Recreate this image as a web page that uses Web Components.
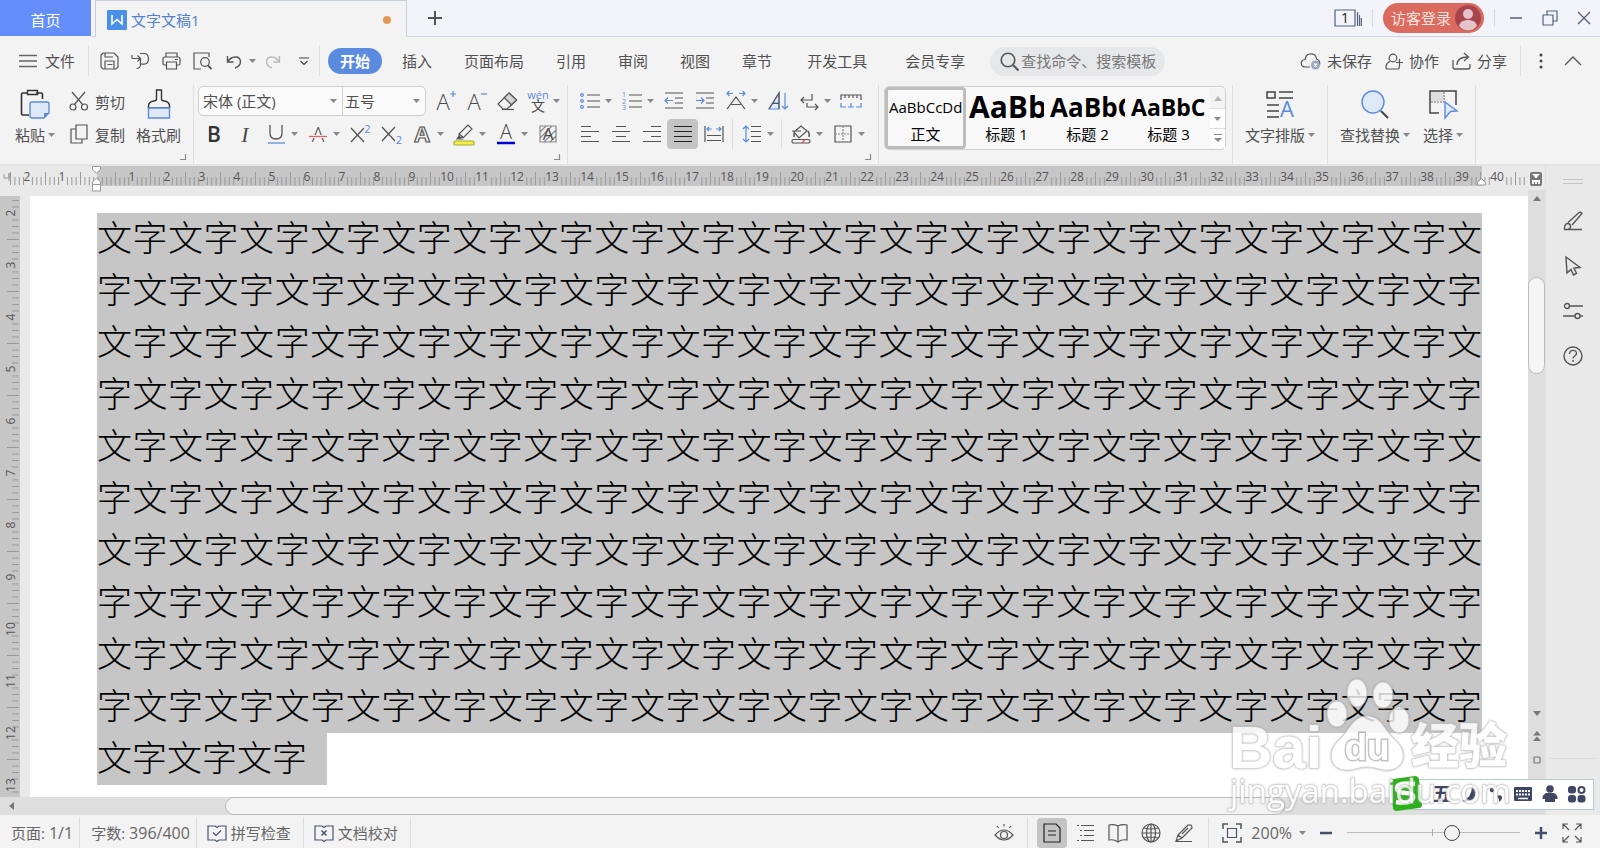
<!DOCTYPE html>
<html lang="zh-CN">
<head>
<meta charset="utf-8">
<title>文字文稿1</title>
<style>
  html, body { height: 100%; }
  body {
    margin: 0;
    font-family: "Open Sans", "Noto Sans CJK SC", sans-serif;
    font-size: 15px;
    color: #505050;
    background: #f3f3f3;
    overflow: hidden;
    --blue: #5b8bdf;
    --line: #dedede;
    --track: #dedede;
  }
</style>
</head>
<body>
<writer-app></writer-app>

<script>
// 图标表：[宽, 高, 内容]
const ICONS = {
  wlogo: [20, 20, '<rect width="20" height="20" rx="1" fill="#4a90e8" stroke="none"/><path d="M5 5v9l5-4.500 5 4.500V5" stroke="#fff" stroke-width="1.600"/>'],
  plus: [14, 14, '<path d="M7 0v14M0 7h14" stroke="#555" stroke-width="2"/>'],
  pages: [28, 18, '<path d="M1 1h20v16H1zM23.500 3v14M25.500 6v11M27.300 9v8" stroke="#55617d"/><text x="11" y="14" text-anchor="middle" font-size="14" style="fill:#222">1</text>'],
  avatar: [26, 26, '<circle cx="13" cy="13" r="13" fill="#a8444c" stroke="none"/><circle cx="13" cy="9" r="5" fill="#e3c3c7" stroke="none"/><path d="M4 21c1-8 17-8 18 0-5 6-13 6-18 0z" fill="#e3c3c7" stroke="none"/>'],
  min: [14, 14, '<path d="M1 7h12" stroke="#55617d" stroke-width="1.500"/>'],
  restore: [16, 16, '<path d="M1 5h10v10H1zM5 5V1h10v10h-4" stroke="#55617d"/>'],
  close: [14, 14, '<path d="M1 1l12 12M13 1L1 13" stroke="#55617d" stroke-width="1.400"/>'],
  menu: [18, 14, '<path d="M0 1.500h18M0 7h18M0 12.500h18" stroke="#666" stroke-width="1.300"/>'],
  save: [19, 18, '<path d="M3 1h11l4 4v10l-2 2H3l-2-2V3z"/><path d="M5 1v4h8M5 17V9h9v8M7.500 12.500h5"/>'],
  exportpdf: [19, 18, '<path d="M9 1.500h4q4.500 0 4.500 5.300t-4.500 5.300H9M9.500 7v6q-.5 3.500-4 3.500M1 6.500h8M6.500 3.500l3 3-3 3M1 3v3.500"/>'],
  print: [19, 18, '<path d="M4 5V1h11v4M4 13H2q-1 0-1-2V7q0-2 2-2h13q2 0 2 2v4q0 2-1 2h-2M4.500 10h10v7h-10zM13 7.500h3"/>'],
  preview: [19, 18, '<path d="M8 17H1V1h15v4"/><circle cx="12" cy="10" r="4.300"/><path d="M15 13.500l3.500 3.500" stroke-width="1.800"/>'],
  undo: [16, 15, '<path d="M1.500 2v6h6M2 7.500C5 2 14 1 14.500 7.500c0 3-2.500 5.500-5.500 6.500" stroke-width="1.400"/>'],
  redo: [16, 15, '<path stroke="#bbb" d="M14.500 2v6h-6M14 7.500C11 2 2 1 1.500 7.500c0 3 2.500 5.500 5.500 6.500" stroke-width="1.400"/>'],
  more: [10, 9, '<path d="M0 1h10M1.500 4L5 7.500 8.500 4" stroke="#444"/>'],
  search: [19, 19, '<circle cx="8" cy="8" r="6.800" stroke-width="1.600"/><path d="M13 13l5.500 5.500" stroke-width="2"/>'],
  cloud: [21, 18, '<path d="M10 15H5c-5-.5-5-7 0-7.500C6 0 16 0 16.500 7c3 1 3.500 4 3 6"/><circle cx="15.500" cy="13" r="4.500" fill="#9ba6bf" stroke="none"/><path d="M14 11.500l3 3m0-3l-3 3" stroke="#fff"/>'],
  team: [18, 17, '<circle cx="8" cy="5" r="3.800"/><path d="M5 8.500c-5 2-4.500 7-3 7.500h11c1.500 0 1.500-2 1-3M11 9.500h7M14.500 6v7"/>'],
  share: [19, 18, '<path d="M1 8v7q0 2 2 2h13q2 0 2-2v-3M5 13c0-6 4-8 11-8M12 1l4.500 4L12 9" stroke-width="1.300"/>'],
  dots: [4, 18, '<g fill="#444" stroke="none"><circle cx="2" cy="3" r="1.500"/><circle cx="2" cy="9" r="1.500"/><circle cx="2" cy="15" r="1.500"/></g>'],
  up: [18, 10, '<path d="M1 9l8-8 8 8" stroke-width="1.300"/>'],
  caret: [7, 4, '<path d="M0 0h7L3.500 4z" fill="#888" stroke="none"/>'],

  paste: [30, 30, '<path d="M8 4H2.500q-1 0-1 1v20q0 1 1 1H9M16 4h5.500q1 0 1 1v5" stroke="#333" stroke-width="1.600"/><path d="M7.500 1.500h10v4h-10z" stroke="#333" stroke-width="1.400"/><path d="M12 13h15q2 0 2 2v9l-5 5H12q-2 0-2-2V15q0-2 2-2z" fill="#dfe8f7" stroke="#5b8bdf" stroke-width="1.400"/><path d="M24 29v-5h5z" fill="#5b8bdf" stroke="none"/>'],
  cut: [20, 20, '<path d="M3 1l11 13M16 1L5 14"/><circle cx="4" cy="16" r="3"/><circle cx="15.500" cy="16" r="3"/>'],
  copy: [20, 20, '<path d="M7 1h11v14H7zM7 5H2v14h11v-4"/>'],
  brush: [26, 30, '<path d="M10.500 1h5v9q0 2 3 2 5 1 5 5v2h-21v-2q0-4 5-5 3 0 3-2z" stroke="#333" stroke-width="1.400"/><path d="M2.500 19h21v10h-21z" fill="#dfe8f7" stroke="#5b8bdf" stroke-width="1.400"/>'],
  bigger: [22, 22, '<text x="9" y="20" text-anchor="middle" font-size="22" font-weight="300">A</text><path d="M16 4h6M19 1v6" stroke="#5b8bdf"/>'],
  smaller: [22, 22, '<text x="9" y="20" text-anchor="middle" font-size="22" font-weight="300">A</text><path d="M16 4h6" stroke="#5b8bdf"/>'],
  eraser: [22, 20, '<path d="M13 2l7.500 7L11 18H7l-5-5z"/><path d="M13 2l7.500 7-5 4.800-7.300-7z" fill="#d5d5d5"/><path d="M6 18.500h12"/>'],
  pinyin: [22, 22, '<text x="11" y="9" text-anchor="middle" font-size="11" style="fill:#5b8bdf">wén</text><text x="11" y="21" text-anchor="middle" font-size="14">文</text>'],
  bold: [20, 22, '<text x="10" y="19" text-anchor="middle" font-size="21" font-weight="600" style="fill:#333">B</text>'],
  italic: [20, 22, '<text x="10" y="19" text-anchor="middle" font-size="22" font-style="italic" style="font-family:Liberation Serif">I</text>'],
  underline: [20, 22, '<path d="M4 2v8q0 6 6 6t6-6V2" stroke-width="1.300"/><path d="M2 20h17" stroke="#5b8bdf" stroke-width="1.300"/>'],
  strike: [20, 22, '<text x="10" y="19" text-anchor="middle" font-size="21" font-weight="300">A</text><path d="M1 13.500h18" stroke="#f3f3f3" stroke-width="3"/><path d="M1 13.500h18" stroke="#e0666e" stroke-width="1.300"/>'],
  sup: [22, 22, '<path d="M2 5l13 14M15 5L2 19" stroke-width="1.300"/><text x="18.500" y="10" text-anchor="middle" font-size="11" style="fill:#5b8bdf">2</text>'],
  sub: [22, 22, '<path d="M2 4l13 14M15 4L2 18" stroke-width="1.300"/><text x="19" y="21" text-anchor="middle" font-size="11" style="fill:#5b8bdf">2</text>'],
  outlineA: [20, 22, '<text x="10" y="19" text-anchor="middle" font-size="22" font-weight="700" style="fill:#f3f3f3;stroke:#555;stroke-width:1.200">A</text>'],
  marker: [22, 22, '<path d="M6 11l9-9 4 4-8 8-5 1zM6 11l5 4M4 16l2-3 3 3z"/><rect x="1" y="18" width="20" height="4" rx="1" fill="#f5f03a" stroke="#a8a850"/>'],
  fontcolor: [20, 22, '<text x="10" y="16" text-anchor="middle" font-size="20" font-weight="300">A</text><path d="M1 20h18" stroke="#0000d0" stroke-width="2.500"/>'],
  shadeA: [20, 20, '<path d="M2 2h16v16H2zM2 8l6-6M2 14L14 2M6 18L18 6M12 18l6-6" stroke="#888"/><text x="10" y="16" text-anchor="middle" font-size="17">A</text>'],

  bullets: [22, 20, '<path d="M8 4h13M8 10h13M8 16h13"/><g stroke="#5b8bdf"><circle cx="3" cy="4" r="1.300"/><circle cx="3" cy="10" r="1.300"/><circle cx="3" cy="16" r="1.300"/></g>'],
  numbers: [22, 20, '<path d="M8 4h13M8 10h13M8 16h13"/><g font-size="7" style="--t:#5b8bdf"><text x="1" y="6">1</text><text x="1" y="12.500">2</text><text x="1" y="19">3</text></g>'],
  outdent: [20, 20, '<path d="M1 2h18M11 7h8M11 12h8M1 17h18"/><path d="M9 9.500H1M4 6.500l-3 3 3 3" stroke="#5b8bdf"/>'],
  indent: [20, 20, '<path d="M1 2h18M11 7h8M11 12h8M1 17h18"/><path d="M1 9.500h8M6 6.500l3 3-3 3" stroke="#5b8bdf"/>'],
  scale: [22, 22, '<path d="M2 19l9-12 9 12M6 14.500h10"/><path d="M8 3.500H2M4.500 1L2 3.500 4.500 6M14 3.500h6M17.500 1L20 3.500 17.500 6" stroke="#5b8bdf"/>'],
  sort: [20, 20, '<path d="M1 18L11 2v16zM5 12h6" stroke="#5b8bdf" fill="#dfe8f7"/><path d="M1 18L11 2v16M4.500 12.500H11"/><path d="M17 2v16M14 15l3 3 3-3" stroke="#5b8bdf"/>'],
  wrap: [20, 20, '<path d="M13 3v6H2M5 6L2 9l3 3M8 12v4h11M16 13l3 3-3 3"/>'],
  tabs: [22, 16, '<path d="M1 7V2h20v5M5 2v3M9 2v3M13 2v3M17 2v3"/><path d="M1 10v4h5M16 14h5v-4M8 14h6M11 10v4" stroke="#5b8bdf"/>'],
  left: [20, 18, '<path d="M1 1.500h10M1 6.500h18M1 11.500h10M1 16.500h18"/>'],
  center: [20, 18, '<path d="M5 1.500h10M1 6.500h18M5 11.500h10M1 16.500h18"/>'],
  right: [20, 18, '<path d="M9 1.500h10M1 6.500h18M9 11.500h10M1 16.500h18"/>'],
  justify: [20, 18, '<path d="M1 1.500h18M1 6.500h18M1 11.500h18M1 16.500h18" stroke="#222"/>'],
  spread: [20, 18, '<path d="M1 1v16M19 1v16M3 10.500h14M3 15.500h14"/><path d="M8 4H3M5 2L3 4l2 2M12 4h5M15 2l2 2-2 2" stroke="#5b8bdf"/>'],
  spacing: [20, 20, '<path d="M9 2.500h10M9 7.500h10M9 12.500h10M9 17.500h10"/><path d="M4 2v16M1 5l3-3 3 3M1 15l3 3 3-3" stroke="#5b8bdf"/>'],
  fill: [22, 20, '<path d="M4 8l7-6 6 5-8 7zM2 7h9"/><path d="M4 9v4M18 7q2 3 1 6" stroke-width="1.500"/><rect x="2" y="15.500" width="18" height="3.500" rx="1.500"/><path d="M12 19l3-3.500" stroke="#e05050"/>'],
  borders: [18, 18, '<path d="M1 1h16v16H1z"/><path d="M9 1v16M1 9h16" stroke-dasharray="2 1" stroke="#888"/>'],
  layout: [30, 30, '<path d="M2 3h8v6H2zM14 3h14M14 9h14M2 16h12M2 22h12M2 28h12" stroke="#444" stroke-width="1.500"/><text x="22" y="28" text-anchor="middle" font-size="22" style="fill:#5b8bdf">A</text>'],
  find: [30, 30, '<path d="M21 22l7 7" stroke="#444" stroke-width="2"/><circle cx="13" cy="13" r="11" fill="#dfe8f7" stroke="#5b8bdf" stroke-width="1.400"/>'],
  select: [32, 30, '<path d="M3 2h13v10H3z" fill="#ddd" stroke="none"/><path d="M12 24H3V2h26v14" stroke="#444" stroke-width="1.500"/><path d="M17 3v10H4" stroke="#777" stroke-dasharray="2 1"/><path d="M18 13l12 9-6.500.500L18 29z" fill="#dfe8f7" stroke="#5b8bdf" stroke-width="1.400"/>'],
  corner: [6, 6, '<path d="M5.500 0v5.500H0" stroke="#888"/>'],

  pencil: [20, 20, '<path d="M1 18.500h18M1 18.500c1-1 0-6 3.500-6 4 0 4 6 0 6M5 11.500L15.500 2q2-1.500 3.500.5L9 14" stroke-width="1.400"/>'],
  cursor: [16, 20, '<path d="M1 1l14 10.500-6 .5 2.500 5.500-3 1.500L6 13.500 2 17z" stroke-width="1.400"/>'],
  sliders: [20, 18, '<g stroke-width="1.400"><circle cx="4" cy="4" r="2.500"/><path d="M6.500 4H20M0 14h12"/><circle cx="14.500" cy="14" r="2.500"/><path d="M17 14h3"/></g>'],
  help: [20, 20, '<circle cx="10" cy="10" r="9" stroke-width="1.400"/><path d="M6.500 8c0-5 7-4.500 7-.5 0 2.500-3.500 2.500-3.500 5M10 14v2" stroke-width="1.400"/>'],
  rulertoggle: [14, 16, '<rect x="1" y="1" width="12" height="14" rx="2" fill="#777" stroke="none"/><path d="M3 3h8L8 6v1H6V6zM3 9h8v4H3z" fill="#fff" stroke="none"/><path d="M5.500 11v2M8.500 11v2" stroke="#777"/>'],
  arrup: [8, 5, '<path d="M0 5h8L4 0z" fill="#777" stroke="none"/>'],
  arrdown: [8, 5, '<path d="M0 0h8L4 5z" fill="#777" stroke="none"/>'],
  arrleft: [5, 8, '<path d="M5 0v8L0 4z" fill="#777" stroke="none"/>'],
  dblup: [8, 10, '<path d="M0 4.500h8L4 0zM0 10h8L4 5.500z" fill="#777" stroke="none"/>'],
  dbldown: [8, 10, '<path d="M0 0h8L4 4.500zM0 5.500h8L4 10z" fill="#777" stroke="none"/>'],
  square: [8, 8, '<rect x="1" y="1" width="6" height="6" rx="1" stroke="#777"/>'],

  spell: [20, 18, '<path d="M8 2H1v14h7l2 1.500 2-1.500h7V2h-7l-2 1.500z" stroke="#4a5470"/><path d="M6 8.500l3 3 5-5" stroke="#4a5470"/>'],
  proof: [20, 18, '<path d="M8 2H1v14h7l2 1.500 2-1.500h7V2h-7l-2 1.500z" stroke="#4a5470"/><path d="M7.500 6.500l5 5m0-5l-5 5" stroke="#4a5470" stroke-width="1.500"/>'],
  eye: [20, 20, '<path d="M1 12q9-10 18 0-9 10-18 0zM10 1v2.500M3 3l1.500 2M17 3l-1.500 2"/><circle cx="10" cy="12" r="3.500"/>'],
  pageview: [18, 20, '<path d="M1 1h12l4 4v14H1zM5 8h8M5 12h8" stroke="#222"/>'],
  outline: [18, 18, '<path d="M1 1.500h2M5 1.500h13M4 6.500h2M8 6.500h10M4 11.500h2M8 11.500h10M1 16.500h2M5 16.500h13"/>'],
  book: [20, 20, '<path d="M10 3q-4-2-9-1v15q5-1 9 2 4-3 9-2V2q-5-1-9 1zM10 3v15"/>'],
  globe: [20, 20, '<circle cx="10" cy="10" r="9"/><ellipse cx="10" cy="10" rx="4.500" ry="9"/><path d="M1 10h18M10 1v18M3 5q7 2 14 0M3 15q7-2 14 0"/>'],
  pen: [20, 20, '<path d="M4 12L14 2q4-1 4 3L8 15l-6 3zM4 12l4 3M2 18.500h16M8 11l6-6"/>'],
  fit: [20, 20, '<path d="M1 6V1h5M14 1h5v5M19 14v5h-5M6 19H1v-5" stroke-width="1.500"/><path d="M5.500 5.500h9v9h-9z" stroke="#4a5470"/>'],
  minus: [14, 14, '<path d="M1 7h12" stroke="#434e68" stroke-width="2.500"/>'],
  add: [14, 14, '<path d="M1 7h12M7 1v12" stroke="#434e68" stroke-width="2.500"/>'],
  full: [20, 20, '<path d="M1 6V1h5M1 1l6 6M14 1h5v5M19 1l-6 6M19 14v5h-5M19 19l-6-6M6 19H1v-5M1 19l6-6"/>'],

  sogou: [36, 36, '<path d="M3 6q0-3 3-3L28 0q3 0 4 3l3 26q0 3-3 3L10 35q-4 0-4-3z" fill="#2eb01c" stroke="none"/><path d="M28 8q-18-2-18 4 0 5 9 5 8 0 7 5-2 6-17 4" stroke="#fff" stroke-width="4.500"/>'],
  wubi: [18, 20, '<text x="9" y="17" text-anchor="middle" font-size="19" font-weight="700" style="fill:#3e4664">五</text>'],
  moon: [18, 18, '<path d="M12 1q7 5 2 12-5 5-12 3Q12 13 12 1z" fill="#3e4664" stroke="none"/>'],
  punct: [18, 18, '<g fill="#3e4664" stroke="none"><circle cx="5" cy="5" r="2.200"/><path d="M10 11q5-2 5 2 0 2-3 4 1-2-2-6z"/></g>'],
  keyboard: [20, 16, '<rect x="1" y="1" width="18" height="14" rx="1" fill="#3e4664" stroke="none"/><path d="M3 5h14M3 8.500h14" stroke="#fff" stroke-width="2" stroke-dasharray="2 1"/><path d="M5 12.500h10" stroke="#fff" stroke-width="1.500"/>'],
  person: [16, 18, '<g fill="#3e4664" stroke="none"><circle cx="8" cy="4" r="3.800"/><path d="M4 8h8q4 2 3.500 6H13v3H3v-3H.500Q0 10 4 8z"/></g>'],
  petals: [18, 18, '<g fill="#3e4664" stroke="none"><rect x="0" y="1" width="8" height="7.500" rx="3"/><rect x="0" y="10" width="8" height="7.500" rx="3"/><rect x="9.500" y="10" width="8" height="7.500" rx="3"/></g><circle cx="13.500" cy="5" r="3" stroke="#3e4664" stroke-width="2"/>'],
};

function icon(name) {
  const [w, h, body] = ICONS[name];
  return `<svg class="i-${name}" width="${w}" height="${h}" viewBox="0 0 ${w} ${h}" fill="none" stroke="#555" stroke-width="1.200" aria-hidden="true">${body}</svg>`;
}

const BASE = `
  :host { display: block; box-sizing: border-box; }
  * { box-sizing: border-box; }
  svg { display: block; flex: none; overflow: visible; }
  svg text { fill: var(--t, #4a4a4a); stroke: none; font-family: "Open Sans", "Noto Sans CJK SC", sans-serif; }
  button, input, select {
    font: inherit; color: inherit; background: none;
    border: 0; margin: 0; padding: 0; outline: 0;
  }
  button { display: flex; align-items: center; justify-content: center; white-space: nowrap; }
  .sep { width: 1px; background: var(--line); flex: none; }
  .grow { flex: 1; }
`;

class BaseElement extends HTMLElement {
  constructor() {
    super();
    this.attachShadow({ mode: 'open' });
  }

  connectedCallback() {
    this.shadowRoot.innerHTML = `<style>${BASE}${this.styles()}</style>${this.render()}`;
  }

  styles() { return ''; }
  render() { return '<slot></slot>'; }
}

// 标题栏
class TitleBar extends BaseElement {
  styles() {
    return `
      :host { display: flex; height: 37px; background: #f2f4f9; line-height: 20px; }
      .home { width: 91px; height: 36px; background: #648ffb; color: #fff; padding-top: 4px; }
      .lead { width: 4px; border-bottom: 1px solid #ccd3e0; }
      .doc { width: 312px; padding: 2px 15px 0 11px; gap: 4px; background: #f3f3f3; color: #5481cf;
        border: 1px solid #c9cfda; border-bottom: 0; justify-content: flex-start; }
      .dot { width: 8px; height: 8px; border-radius: 50%; background: #e29a58; margin-left: auto; }
      .rest { flex: 1; display: flex; align-items: center; border-bottom: 1px solid #ccd3e0; padding: 0 9px 0 21px; }
      .sep { height: 18px; margin: 0 10px; background: #d5d8de; }
      .login { height: 30px; border-radius: 15px; background: #db6b5f; color: #fbe3df; padding: 0 3px 0 8px; gap: 4px; }
      .wins { display: flex; gap: 20px; margin-left: 4px; }
      .wins button { width: 14px; height: 30px; }
    `;
  }

  render() {
    return `
      <button class="home">首页</button>
      <div class="lead"></div>
      <button class="doc">${icon('wlogo')}<span>文字文稿1</span><i class="dot"></i></button>
      <div class="rest">
        <button aria-label="新建">${icon('plus')}</button>
        <div class="grow"></div>
        <button aria-label="窗口">${icon('pages')}</button>
        <div class="sep"></div>
        <button class="login">访客登录${icon('avatar')}</button>
        <div class="sep"></div>
        <div class="wins">
          <button aria-label="最小化">${icon('min')}</button>
          <button aria-label="还原">${icon('restore')}</button>
          <button aria-label="关闭">${icon('close')}</button>
        </div>
      </div>
    `;
  }
}

// 菜单栏
class MenuBar extends BaseElement {
  styles() {
    return `
      :host { display: flex; align-items: center; height: 48px; padding: 0 18px 0 19px; line-height: 20px; }
      .file { gap: 8px; }
      .sep { height: 30px; }
      .file + .sep { margin: 0 5px 0 13px; }
      .quick { width: 31px; height: 30px; }
      .quick.drop { width: 39px; gap: 7px; padding-left: 6px; }
      nav { display: flex; align-items: center; gap: 4px; margin-left: 8px; }
      nav button { padding: 0 14px; height: 26px; }
      nav button.wide { padding: 0 17px; }
      nav .on { background: #5b8bdf; color: #fff; font-weight: 700; border-radius: 13px; padding: 0 12px; margin-right: 2px; }
      .search { display: flex; align-items: center; gap: 2px; height: 29px; width: 175px; border-radius: 15px;
        background: #e6e7e8; padding: 0 10px; margin-left: 8px; }
      input { width: 136px; }
      input::placeholder { color: #777; opacity: 1; }
      .act { gap: 6px; margin-right: 13px; }
    `;
  }

  render() {
    return `
      <button class="file">${icon('menu')}文件</button>
      <div class="sep"></div>
      <button class="quick" aria-label="保存">${icon('save')}</button>
      <button class="quick" aria-label="输出为PDF">${icon('exportpdf')}</button>
      <button class="quick" aria-label="打印">${icon('print')}</button>
      <button class="quick" aria-label="打印预览">${icon('preview')}</button>
      <button class="quick drop" aria-label="撤销">${icon('undo')}${icon('caret')}</button>
      <button class="quick" aria-label="恢复">${icon('redo')}</button>
      <button class="quick" aria-label="更多">${icon('more')}</button>
      <div class="sep"></div>
      <nav>
        <button class="on">开始</button>
        <button>插入</button>
        <button>页面布局</button>
        <button>引用</button>
        <button>审阅</button>
        <button>视图</button>
        <button>章节</button>
        <button class="wide">开发工具</button>
        <button class="wide">会员专享</button>
      </nav>
      <label class="search">${icon('search')}<input type="text" placeholder="查找命令、搜索模板" aria-label="查找命令、搜索模板"></label>
      <div class="grow"></div>
      <button class="act">${icon('cloud')}未保存</button>
      <button class="act">${icon('team')}协作</button>
      <button class="act">${icon('share')}分享</button>
      <div class="sep" style="margin-right:18px"></div>
      <button aria-label="更多选项" style="margin-right:21px">${icon('dots')}</button>
      <button aria-label="折叠功能区">${icon('up')}</button>
    `;
  }
}

// 小工具按钮
class ToolButton extends BaseElement {
  styles() {
    return `
      :host { flex: none; width: 31px; height: 30px; }
      :host([caret]) { width: 42px; }
      button { width: 100%; height: 100%; justify-content: flex-start; }
      .box { width: 31px; height: 30px; display: flex; align-items: center; justify-content: center; border-radius: 4px; }
      :host([active]) .box { background: #c4c4c4; }
    `;
  }

  render() {
    return `<button aria-label="${this.getAttribute('label')}">
      <span class="box">${icon(this.getAttribute('icon'))}</span>${this.hasAttribute('caret') ? icon('caret') : ''}
    </button>`;
  }
}

// 大按钮：上图标下文字
class BigButton extends BaseElement {
  styles() {
    return `
      button { flex-direction: column; line-height: 20px; }
      .pic { height: 36px; display: flex; align-items: center; }
      .text { height: 26px; display: flex; align-items: center; gap: 3px; }
    `;
  }

  render() {
    return `<button>
      <span class="pic">${icon(this.getAttribute('icon'))}</span>
      <span class="text"><slot></slot>${this.hasAttribute('caret') ? icon('caret') : ''}</span>
    </button>`;
  }
}

class RibbonGroup extends BaseElement {
  styles() {
    return `
      :host { display: grid; grid-template-rows: 64px 1fr; border-right: 1px solid var(--line); padding-top: 1px; flex: none; }
      .body { display: flex; }
      .foot { justify-self: end; padding: 4px 7px 0 0; }
    `;
  }

  render() {
    return `<div class="body"><slot></slot></div>${this.hasAttribute('more') ? `<div class="foot">${icon('corner')}</div>` : ''}`;
  }
}

// 字体与字号
class FontPicker extends BaseElement {
  styles() {
    return `
      :host { display: flex; width: 228px; height: 30px; margin-right: 3px; border: 1px solid #cfcfcf; border-radius: 5px; background: #fafafa; }
      .cell { display: grid; grid-template-columns: 1fr 12px; align-items: center; width: 82px; }
      .name { width: 144px; border-right: 1px solid #cfcfcf; }
      select { appearance: none; grid-area: 1 / 1 / 2 / 3; width: 100%; height: 28px; padding-left: 4px; }
      .cell:not(.name) select { padding-left: 2px; }
      svg { grid-area: 1 / 2; pointer-events: none; }
    `;
  }

  render() {
    return `
      <div class="cell name"><select aria-label="字体"><option>宋体 (正文)</option></select>${icon('caret')}</div>
      <div class="cell"><select aria-label="字号"><option>五号</option></select>${icon('caret')}</div>
    `;
  }
}

class StyleCard extends BaseElement {
  styles() {
    return `
      :host { width: 79px; height: 60px; overflow: hidden; margin: 0 1px; padding: 2px; color: #000; }
      :host([active]) { outline: 3px solid #bdbdbd; outline-offset: -2px; border-radius: 3px; }
      button { display: block; width: 100%; text-align: left; }
      .sample { display: block; height: 34px; line-height: 34px; overflow: hidden; font-weight: 700; font-size: var(--s, 15px); }
      :host([active]) .sample { font-weight: 400; padding-left: 1px; }
      .name { display: block; text-align: center; line-height: 20px; }
    `;
  }

  render() {
    return `<button style="--s:${this.getAttribute('size')}px"><span class="sample">AaBbCcDd</span><span class="name"><slot></slot></span></button>`;
  }
}

class StyleGallery extends BaseElement {
  styles() {
    return `
      :host { display: flex; width: 342px; height: 64px; border: 1px solid #d0d0d0; border-radius: 5px; background: #f8f8f8; padding: 1px 0; }
      .arrows { margin-left: auto; width: 15px; display: grid; grid-template-rows: repeat(3, 1fr); }
      .arrows button { border-top: 1px solid #ddd; background: #fff; }
      .arrows button:first-child { background: #f0f0f0; border: 0; opacity: 0.500; }
    `;
  }

  render() {
    return `
      <slot></slot>
      <div class="arrows">
        <button aria-label="上一行">${icon('arrup')}</button>
        <button aria-label="下一行">${icon('caret')}</button>
        <button aria-label="更多样式"><svg width="8" height="9" viewBox="0 0 8 9"><path d="M0 .5h8" stroke="#888"/><path d="M0 4h8L4 8z" fill="#888"/></svg></button>
      </div>
    `;
  }
}

// 功能区
class RibbonBar extends BaseElement {
  styles() {
    return `
      :host { display: flex; height: 81px; border-bottom: 2px solid #e3e3e3; }
      .rows { display: grid; grid-template-rows: 30px 30px; row-gap: 3px; }
      .rows > div { display: flex; }
      .clip button { gap: 6px; height: 30px; }
      .inner { width: 1px; background: var(--line); margin: 0 3px; }
    `;
  }

  tools(list) {
    return list.map(([name, label, flag = '']) =>
      name === '|' ? '<div class="inner"></div>' : `<tool-button icon="${name}" label="${label}" ${flag}></tool-button>`).join('');
  }

  render() {
    return `
      <ribbon-group more style="padding-left:15px">
        <big-button icon="paste" caret>粘贴</big-button>
        <div class="rows clip" style="margin:0 11px 0 14px">
          <button>${icon('cut')}剪切</button>
          <button>${icon('copy')}复制</button>
        </div>
        <big-button icon="brush" style="margin-right:12px">格式刷</big-button>
      </ribbon-group>
      <ribbon-group more style="padding-left:4px">
        <div class="rows" style="margin-right:3px">
          <div>
            <font-picker></font-picker>
            ${this.tools([['bigger', '增大字号'], ['smaller', '减小字号'], ['eraser', '清除格式'], ['pinyin', '拼音指南', 'caret']])}
          </div>
          <div>
            ${this.tools([['bold', '加粗'], ['italic', '倾斜'], ['underline', '下划线', 'caret'], ['strike', '删除线', 'caret'],
              ['sup', '上标'], ['sub', '下标'], ['outlineA', '文字效果', 'caret'], ['marker', '突出显示', 'caret'],
              ['fontcolor', '字体颜色', 'caret'], ['shadeA', '字符底纹']])}
          </div>
        </div>
      </ribbon-group>
      <ribbon-group more style="padding-left:6px">
        <div class="rows" style="margin-right:9px">
          <div>
            ${this.tools([['bullets', '项目符号', 'caret'], ['numbers', '编号', 'caret'], ['outdent', '减少缩进'], ['indent', '增加缩进'],
              ['scale', '中文版式', 'caret'], ['sort', '排序'], ['wrap', '换行', 'caret'], ['tabs', '制表位']])}
          </div>
          <div>
            ${this.tools([['left', '左对齐'], ['center', '居中'], ['right', '右对齐'], ['justify', '两端对齐', 'active'], ['spread', '分散对齐'],
              ['|'], ['spacing', '行距', 'caret'], ['|'], ['fill', '底纹', 'caret'], ['borders', '边框', 'caret']])}
          </div>
        </div>
      </ribbon-group>
      <ribbon-group style="padding-left:5px">
        <style-gallery style="margin-right:6px">
          <style-card active size="15">正文</style-card>
          <style-card size="30">标题 1</style-card>
          <style-card size="26">标题 2</style-card>
          <style-card size="23">标题 3</style-card>
        </style-gallery>
      </ribbon-group>
      <ribbon-group style="padding-left:12px">
        <big-button icon="layout" caret style="margin-right:12px">文字排版</big-button>
      </ribbon-group>
      <ribbon-group style="padding-left:12px">
        <big-button icon="find" caret style="margin-right:13px">查找替换</big-button>
        <big-button icon="select" caret style="margin-right:12px">选择</big-button>
      </ribbon-group>
    `;
  }
}

// 水平标尺，一格 35px
class HRuler extends BaseElement {
  styles() {
    return `
      :host { display: grid; grid-template-columns: 97px 1fr 46px; height: 30px; background: #e9e9e9; overflow: hidden; min-width: 0; }
      .band { grid-area: 1 / 2; height: 20px; background: #c6c6c6; }
      .ticks { grid-area: 1 / 1 / 2 / 4; display: flex; padding-left: 10px; overflow: hidden; z-index: 1; }
      .mark { z-index: 2; width: 12px; }
      .first { grid-area: 1 / 2; margin-left: -6px; }
      .last { grid-area: 1 / 3; margin: 12px 0 0 -6px; }
      .stop { grid-area: 1 / 1; margin: 7px 0 0 3px; }
    `;
  }

  cell(n) {
    const label = n === 0 || n > 40 ? '' : Math.abs(n);
    let d = 'M0.500 6v13';
    for (let k = 1; k < 8; k++) {
      const wide = label > 9 && (k === 3 || k === 5);
      if (wide || (k === 4 && label)) continue;
      d += `M${(k * 4.375 + 0.5).toFixed(1)} 11v8`;
    }
    const text = label ? `<text x="17" y="15" text-anchor="middle" font-size="12" style="fill:#555">${label}</text>` : '';
    return `<svg width="35" height="20" viewBox="0 0 35 20"><path d="${d}" stroke="#999" fill="none"/>${text}</svg>`;
  }

  render() {
    let cells = '';
    for (let n = -2; n <= 41; n++) cells += this.cell(n);
    return `
      <div class="band"></div>
      <div class="ticks">${cells}</div>
      <svg class="stop" width="7" height="9" viewBox="0 0 7 9"><path d="M1 1v4h5V0v8" stroke="#999" fill="none"/></svg>
      <svg class="mark first" width="12" height="27" viewBox="0 0 12 27"><path d="M1.500 .5h8v3L5.500 7l-4-3.500zM5.500 12l4 4v2.500h-8V16zM1.500 18.500h8V25h-8z" fill="#fff" stroke="#999"/></svg>
      <svg class="mark last" width="12" height="8" viewBox="0 0 12 8"><path d="M5.500 .5l4 4V7h-8V4.500z" fill="#fff" stroke="#999"/></svg>
    `;
  }
}

// 垂直标尺，一格 52px
class VRuler extends BaseElement {
  styles() {
    return `
      :host { width: 20px; background: #c6c6c6; overflow: hidden; }
      svg:first-of-type { margin-top: -9px; }
    `;
  }

  render() {
    let out = '';
    for (let n = 2; n <= 13; n++) {
      let d = 'M7 .5h12';
      for (let k = 1; k < 8; k++) {
        if (k !== 4) d += `M12 ${k * 6.5 + 0.5}h7`;
      }
      out += `<svg width="20" height="52" viewBox="0 0 20 52"><path d="${d}" stroke="#999" fill="none"/>
        <text x="11" y="30" text-anchor="middle" font-size="12" transform="rotate(-90 11 26)" style="fill:#555">${n}</text></svg>`;
    }
    return out;
  }
}

// 文档页面，正文处于选中状态
class DocPage extends BaseElement {
  styles() {
    return `
      :host { flex: 1; min-width: 0; background: #fff; margin-left: 10px; padding: 14px 46px 0 67px; overflow: hidden; }
      p { margin: 0; font: 300 35px/52px "Noto Sans CJK SC", sans-serif; color: #000; text-align: justify; }
      mark {
        color: inherit;
        padding: 0 20px 4px 0;
        background: linear-gradient(#c6c6c6, #c6c6c6) 0 3px / 100% 52px no-repeat;
      }
    `;
  }

  render() {
    return '<p><mark><slot></slot></mark></p>';
  }
}

class ScrollColumn extends BaseElement {
  styles() {
    return `
      :host { width: 17px; display: flex; flex-direction: column; align-items: center; background: var(--track); }
      .top { height: 24px; width: 17px; background: #e9e9e9; padding: 5px 0 0 1px; }
      .i-arrup { margin-top: 6px; }
      .thumb { width: 17px; height: 97px; border-radius: 9px; border: 1px solid #bbb; background: #f5f5f5; margin-top: 76px; }
      .tail { margin-top: auto; display: flex; flex-direction: column; align-items: center; gap: 15px; padding-bottom: 8px; }
    `;
  }

  render() {
    return `
      <div class="top">${icon('rulertoggle')}</div>
      ${icon('arrup')}
      <div class="thumb"></div>
      <div class="tail">${icon('arrdown')}${icon('dblup')}${icon('square')}${icon('dbldown')}</div>
    `;
  }
}

class HScroll extends BaseElement {
  styles() {
    return `
      :host { display: flex; align-items: center; height: 18px; background: var(--track); padding: 0 260px 0 9px; }
      .thumb { flex: 1; height: 18px; margin-left: 211px; border: 1px solid #bbb; border-radius: 9px; background: #f3f3f3; }
    `;
  }

  render() {
    return `${icon('arrleft')}<div class="thumb"></div>`;
  }
}

class SidePane extends BaseElement {
  styles() {
    return `
      :host { width: 55px; display: flex; flex-direction: column; align-items: center; background: #e9e9e9; border-left: 1px solid #e0e0e0; padding-top: 13px; }
      .grip { width: 20px; height: 5px; border: solid #c4c4c4; border-width: 1px 0; margin-bottom: 14px; }
      button { width: 36px; height: 45px; }
      .line { width: 48px; height: 1px; background: #dcdcdc; margin: auto 0 56px; }
    `;
  }

  render() {
    return `
      <div class="grip"></div>
      <button aria-label="样式">${icon('pencil')}</button>
      <button aria-label="选择窗格">${icon('cursor')}</button>
      <button aria-label="设置">${icon('sliders')}</button>
      <button aria-label="帮助">${icon('help')}</button>
      <div class="line"></div>
    `;
  }
}

// 状态栏
class StatusBar extends BaseElement {
  styles() {
    return `
      :host { display: flex; align-items: center; height: 33px; background: #f3f3f3; color: #666; padding: 2px 18px 0 0; line-height: 20px; }
      .item { display: flex; align-items: center; gap: 4px; height: 31px; padding: 0 12px 0 10px; border-right: 1px solid var(--line); }
      .count { padding: 0 6px 0 11px; }
      .num { font-size: 16px; }
      .sep { height: 31px; }
      .view { width: 30px; height: 30px; border-radius: 4px; margin-right: 3px; }
      .view.on { background: #c4c4c4; }
      .zoom { gap: 7px; }
      .range { width: 173px; height: 16px; margin: 0 14px; appearance: none; background: linear-gradient(#aaa, #aaa) 85px 50% / 1px 7px no-repeat, linear-gradient(#bbb, #bbb) 0 50% / 100% 1px no-repeat; }
      .range::-webkit-slider-thumb { appearance: none; width: 16px; height: 16px; border-radius: 50%; border: 1px solid #444; background: #f3f3f3; }
    `;
  }

  render() {
    return `
      <div class="item count">页面: <span class="num">1/1</span></div>
      <div class="item count">字数: <span class="num">396/400</span></div>
      <button class="item">${icon('spell')}拼写检查</button>
      <button class="item">${icon('proof')}文档校对</button>
      <div class="grow"></div>
      <button aria-label="护眼模式">${icon('eye')}</button>
      <div class="sep" style="margin:0 9px 0 13px"></div>
      <button class="view on" aria-label="页面视图">${icon('pageview')}</button>
      <button class="view" aria-label="大纲">${icon('outline')}</button>
      <button class="view" aria-label="阅读版式">${icon('book')}</button>
      <button class="view" aria-label="Web版式">${icon('globe')}</button>
      <button class="view" aria-label="写作模式">${icon('pen')}</button>
      <div class="sep" style="margin:0 13px 0 6px"></div>
      <button aria-label="适合页面" style="margin-right:9px">${icon('fit')}</button>
      <button class="zoom num" style="margin-right:13px">200%${icon('caret')}</button>
      <button aria-label="缩小">${icon('minus')}</button>
      <input class="range" type="range" min="0" max="100" value="62" aria-label="显示比例">
      <button aria-label="放大" style="margin-right:14px">${icon('add')}</button>
      <button aria-label="全屏">${icon('full')}</button>
    `;
  }
}

// 输入法悬浮条
class ImeBar extends BaseElement {
  styles() {
    return `
      :host { position: fixed; right: 6px; bottom: 36px; display: flex; align-items: center; }
      .logo { margin-right: -14px; z-index: 1; }
      .bar { display: flex; align-items: center; gap: 9px; height: 31px; background: #fff; border: 1px solid #b5c6d8; padding: 0 7px 0 23px; }
      .bar button { width: 18px; }
    `;
  }

  render() {
    return `
      <div class="logo">${icon('sogou')}</div>
      <div class="bar">
        <button aria-label="五笔">${icon('wubi')}</button>
        <button aria-label="半角">${icon('moon')}</button>
        <button aria-label="标点">${icon('punct')}</button>
        <button aria-label="软键盘">${icon('keyboard')}</button>
        <button aria-label="账户">${icon('person')}</button>
        <button aria-label="工具箱">${icon('petals')}</button>
      </div>
    `;
  }
}

// 右下角水印
class SiteMark extends BaseElement {
  styles() {
    return `
      :host { position: fixed; right: 78px; bottom: 26px; z-index: 5; pointer-events: none; opacity: 0.800; filter: drop-shadow(0 0 1px #999); }
      svg text { fill: #fff; stroke: #c8c8c8; stroke-width: 1px; paint-order: stroke; }
    `;
  }

  render() {
    return `
      <svg width="294" height="146" viewBox="0 0 294 146">
        <text x="1" y="92" font-size="60" font-weight="700" style="font-family:Liberation Sans">Bai</text>
        <g fill="#fff" stroke="#c8c8c8">
          <ellipse cx="109" cy="38" rx="10" ry="13"/>
          <ellipse cx="129" cy="17" rx="10" ry="14"/>
          <ellipse cx="155" cy="19" rx="10" ry="13"/>
          <ellipse cx="171" cy="44" rx="10" ry="13"/>
          <path d="M139 40c14 0 18 15 28 24 13 11 10 28-5 30-9 1-14-3-23-3s-14 4-23 3c-15-2-17-19-5-30 10-9 14-24 28-24z"/>
        </g>
        <text x="139" y="84" text-anchor="middle" font-size="37" font-weight="700" style="stroke:#b5b5b5;stroke-width:3px;font-family:Liberation Sans">du</text>
        <text x="183" y="87" font-size="48" font-weight="900" style="font-family:Noto Sans CJK SC">经验</text>
        <text x="2" y="127" font-size="33" style="font-family:Open Sans">jingyan.baidu.com</text>
      </svg>
    `;
  }
}

class WriterApp extends BaseElement {
  styles() {
    return `
      :host { display: flex; flex-direction: column; height: 100vh; }
      title-bar, menu-bar, ribbon-bar, status-bar { flex: none; }
      .work { flex: 1; display: flex; min-height: 0; }
      .left { flex: 1; display: flex; flex-direction: column; min-width: 0; }
      .upper { flex: 1; display: flex; min-height: 0; }
      .sheet { flex: 1; display: flex; flex-direction: column; min-width: 0; }
      .canvas { flex: 1; display: flex; min-height: 0; background: #e9e9e9; }
    `;
  }

  render() {
    return `
      <title-bar></title-bar>
      <menu-bar></menu-bar>
      <ribbon-bar></ribbon-bar>
      <div class="work">
        <div class="left">
          <div class="upper">
            <div class="sheet">
              <h-ruler></h-ruler>
              <div class="canvas">
                <v-ruler></v-ruler>
                <doc-page>${'文字'.repeat(198)}</doc-page>
              </div>
            </div>
            <scroll-column></scroll-column>
          </div>
          <h-scroll></h-scroll>
        </div>
        <side-pane></side-pane>
      </div>
      <status-bar></status-bar>
      <ime-bar></ime-bar>
      <site-mark></site-mark>
    `;
  }
}

customElements.define('title-bar', TitleBar);
customElements.define('menu-bar', MenuBar);
customElements.define('tool-button', ToolButton);
customElements.define('big-button', BigButton);
customElements.define('ribbon-group', RibbonGroup);
customElements.define('font-picker', FontPicker);
customElements.define('style-card', StyleCard);
customElements.define('style-gallery', StyleGallery);
customElements.define('ribbon-bar', RibbonBar);
customElements.define('h-ruler', HRuler);
customElements.define('v-ruler', VRuler);
customElements.define('doc-page', DocPage);
customElements.define('scroll-column', ScrollColumn);
customElements.define('h-scroll', HScroll);
customElements.define('side-pane', SidePane);
customElements.define('status-bar', StatusBar);
customElements.define('ime-bar', ImeBar);
customElements.define('site-mark', SiteMark);
customElements.define('writer-app', WriterApp);
</script>
</body>
</html>
